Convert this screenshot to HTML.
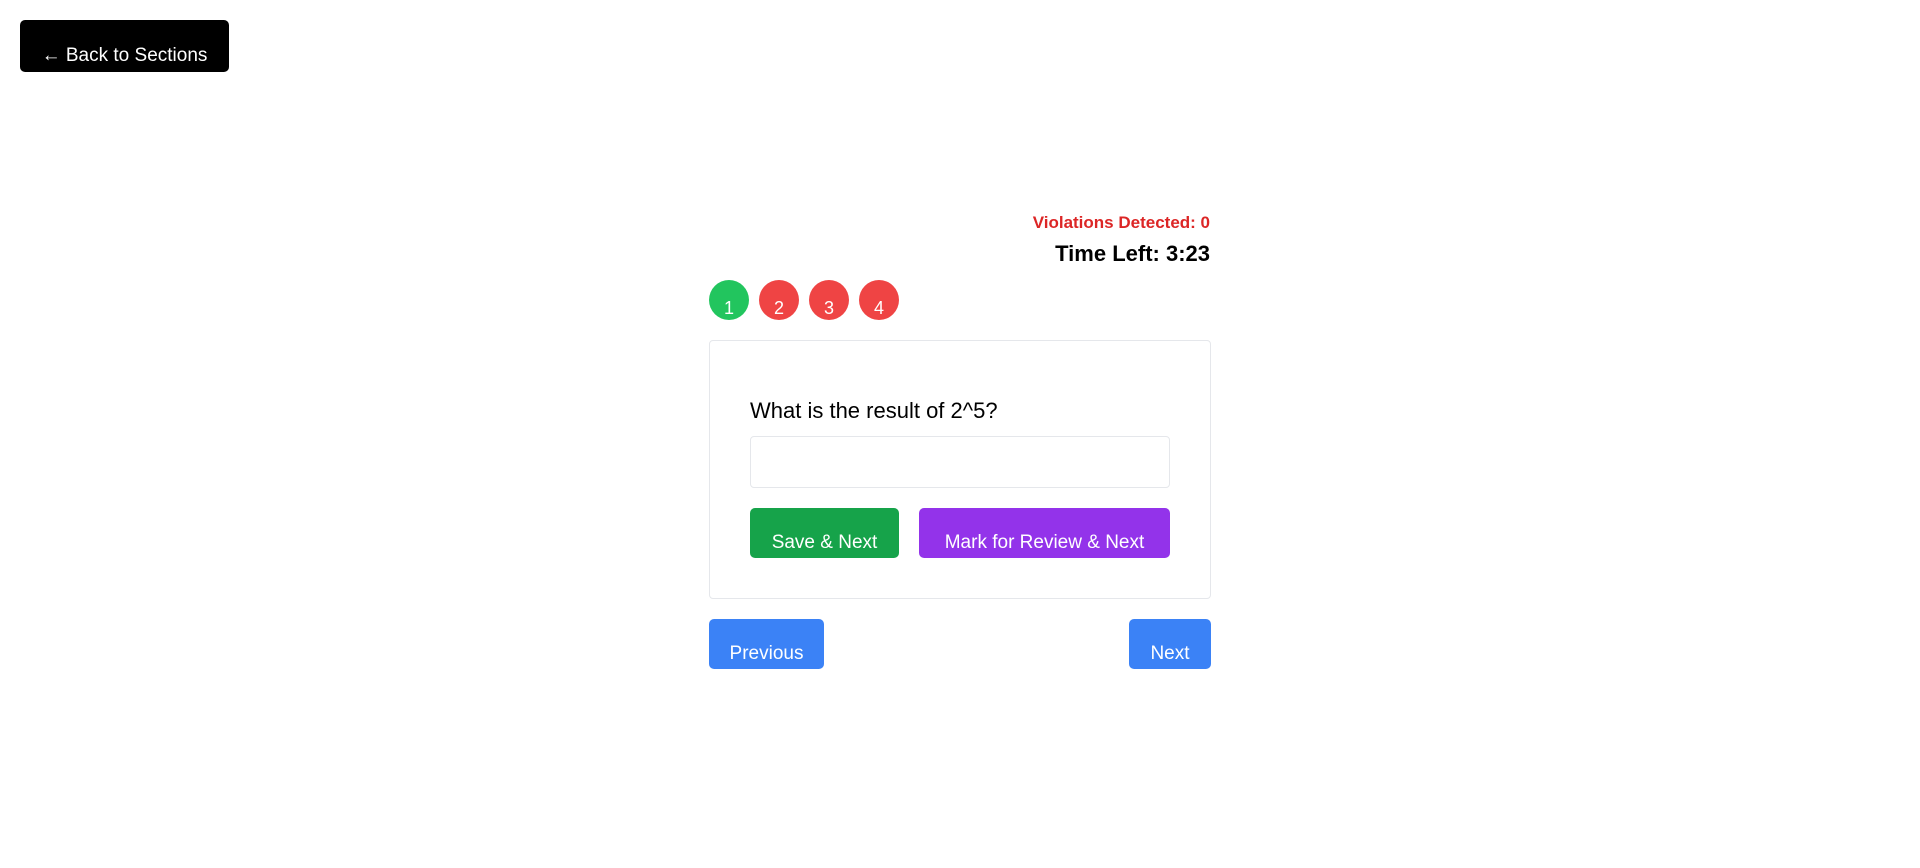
<!DOCTYPE html>
<html><head><style>
body{margin:0;width:1920px;height:868px;background:#fff;font-family:"Liberation Sans",sans-serif;position:relative;overflow:hidden}
.a{position:absolute;box-sizing:border-box}
.btn{color:#fff;border-radius:5px;font-size:19px;text-align:center;line-height:1}
.c{width:40px;height:40px;border-radius:50%;color:#fff;font-size:18px;text-align:center;line-height:1;padding-top:19px}
</style></head><body>
<div class="a btn" style="left:20px;top:20px;width:209px;height:52px;background:#000;padding-top:26px;font-size:19px">← Back to Sections</div>
<div class="a" style="right:710px;top:213px;color:#dc2626;font-weight:bold;font-size:17px">Violations Detected: 0</div>
<div class="a" style="right:710px;top:241px;color:#000;font-weight:bold;font-size:22px">Time Left: 3:23</div>
<div class="a c" style="left:709px;top:280px;background:#22c55e">1</div>
<div class="a c" style="left:759px;top:280px;background:#ef4444">2</div>
<div class="a c" style="left:809px;top:280px;background:#ef4444">3</div>
<div class="a c" style="left:859px;top:280px;background:#ef4444">4</div>
<div class="a" style="left:709px;top:340px;width:502px;height:259px;border:1px solid #e5e7eb;border-radius:4px"></div>
<div class="a" style="left:750px;top:398px;font-size:22px;color:#000">What is the result of 2^5?</div>
<div class="a" style="left:750px;top:436px;width:420px;height:52px;border:1px solid #e5e7eb;border-radius:4px"></div>
<div class="a btn" style="left:750px;top:508px;width:149px;height:50px;background:#16a34a;padding-top:25px">Save &amp; Next</div>
<div class="a btn" style="left:919px;top:508px;width:251px;height:50px;background:#9333ea;padding-top:25px">Mark for Review &amp; Next</div>
<div class="a btn" style="left:709px;top:619px;width:115px;height:50px;background:#3b82f6;padding-top:25px">Previous</div>
<div class="a btn" style="left:1129px;top:619px;width:82px;height:50px;background:#3b82f6;padding-top:25px">Next</div>
</body></html>
